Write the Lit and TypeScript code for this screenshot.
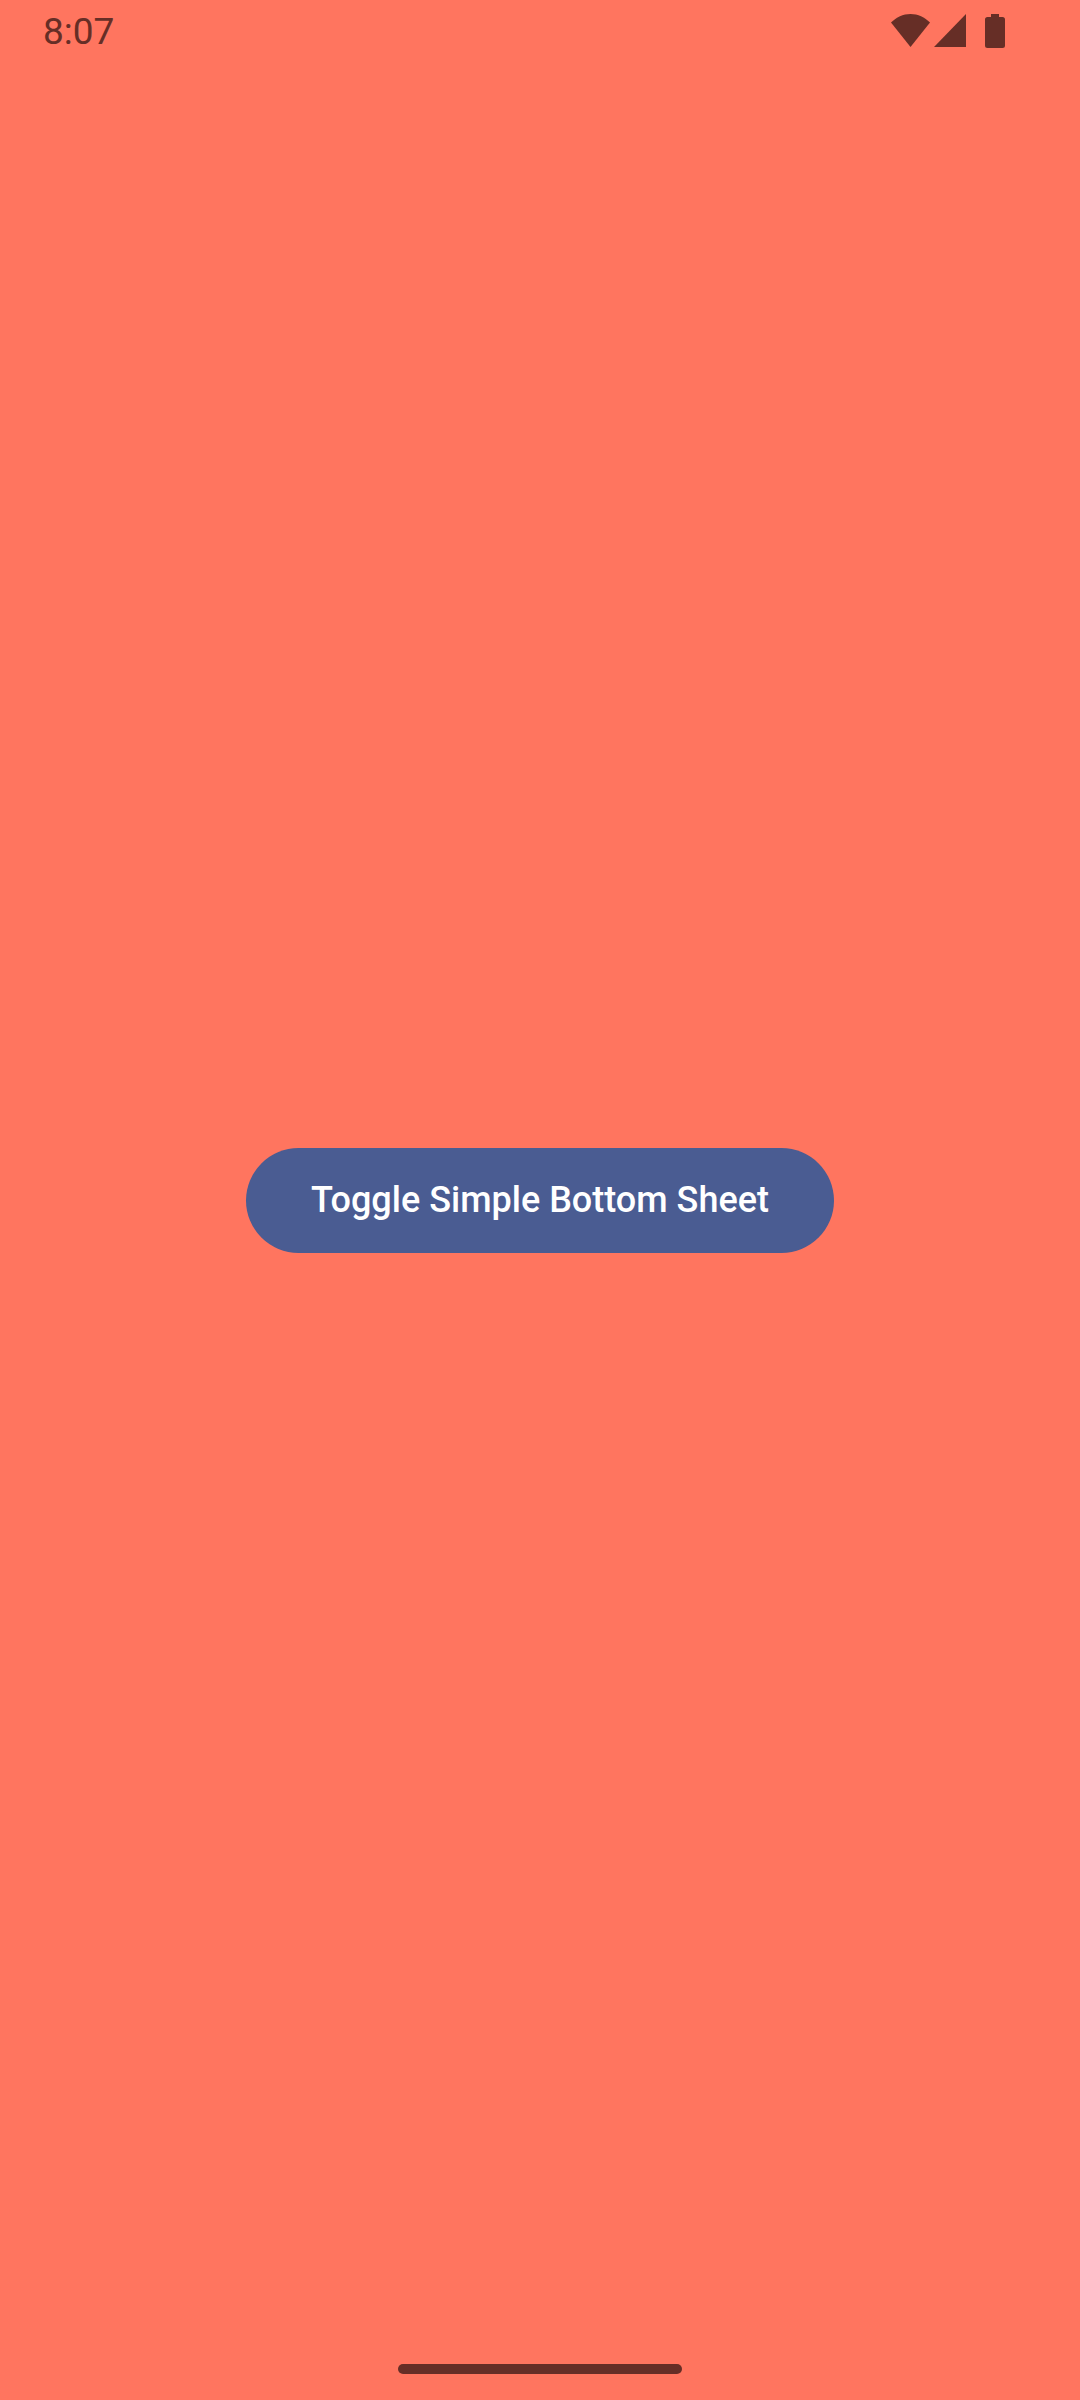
import { LitElement, html, css } from "lit";
import { customElement, state } from "lit/decorators.js";

@customElement("app-root")
export class AppRoot extends LitElement {
  static styles = css`
    :host {
      display: flex;
      flex-direction: column;
      min-height: 100vh;
      background: #ff755f;
      color: #662e26;
      font-family: Roboto, "Liberation Sans", sans-serif;
    }
    .status {
      display: flex;
      align-items: flex-start;
      justify-content: space-between;
      height: 62px;
      padding: 10px 75px 0 43px;
      box-sizing: border-box;
    }
    .time {
      font-size: 37px;
      line-height: 44px;
    }
    .icons {
      display: flex;
      align-items: center;
      gap: 4px;
      padding-top: 4px;
    }
    .icons svg {
      display: block;
      fill: currentColor;
    }
    .battery {
      margin-left: 15px;
    }
    main {
      flex: 1;
      display: flex;
      align-items: center;
      justify-content: center;
    }
    .toggle {
      border: 0;
      border-radius: 53px;
      padding: 26px 65px;
      background: #4a5c92;
      color: #fff;
      font-family: inherit;
      font-size: 36px;
      font-weight: 500;
      line-height: 53px;
      cursor: pointer;
    }
    .nav {
      display: flex;
      align-items: center;
      justify-content: center;
      height: 62px;
    }
    .handle {
      width: 284px;
      height: 10px;
      border-radius: 5px;
      background: currentColor;
    }
  `;

  @state() private open = false;

  private toggle() {
    this.open = !this.open;
  }

  render() {
    return html`
      <header class="status">
        <time class="time">8:07</time>
        <div class="icons">
          <svg width="39" height="34" viewBox="0 0 39 34" aria-hidden="true">
            <path d="M0 8.600C5.300 3.200 12 0 19.500 0S33.700 3.200 39 8.600L19.500 33Z" />
          </svg>
          <svg width="32" height="34" viewBox="0 0 32 34" aria-hidden="true">
            <path d="M32 0V33H0Z" />
          </svg>
          <svg class="battery" width="20" height="34" viewBox="0 0 20 34" aria-hidden="true">
            <path d="M6 0H14V3H17.500Q20 3 20 5.500V31.500Q20 34 17.500 34H2.500Q0 34 0 31.500V5.500Q0 3 2.500 3H6Z" />
          </svg>
        </div>
      </header>
      <main>
        <button class="toggle" type="button" aria-pressed=${this.open} @click=${this.toggle}>
          Toggle Simple Bottom Sheet
        </button>
      </main>
      <footer class="nav"><div class="handle"></div></footer>
    `;
  }
}
